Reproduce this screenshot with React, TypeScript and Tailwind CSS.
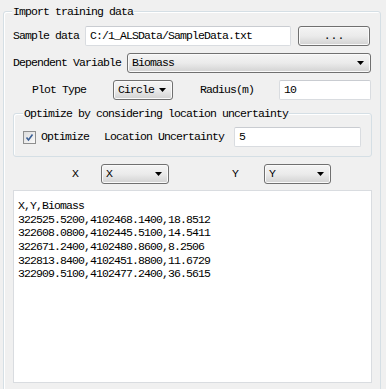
import React from "react";

const font = { fontFamily: '"Liberation Mono", "DejaVu Sans Mono", monospace' };

function Arrow() {
  return (
    <svg width="7" height="4" viewBox="0 0 7 4" className="shrink-0">
      <path d="M0 0H7L3.5 4Z" fill="#000" />
    </svg>
  );
}

function Combo({ w, text }: { w: string; text: string }) {
  return (
    <div
      className={`${w} h-[20px] flex items-center justify-between pl-[4px] pr-[6px] border border-[#707070] rounded-[3px] bg-linear-to-b from-[#f4f4f4] via-[#ebebeb] to-[#d2d2d2] shadow-[inset_0_0_0_1px_#fafafa]`}
    >
      <span>{text}</span>
      <Arrow />
    </div>
  );
}

function Input({ w, text }: { w: string; text: string }) {
  return (
    <div className={`${w} h-[20px] flex items-center pl-[4px] bg-white border border-[#d9dce0] border-t-[#c9ccd1] rounded-[2px]`}>
      {text}
    </div>
  );
}

export default function App() {
  const lines = [
    "X,Y,Biomass",
    "322525.5200,4102468.1400,18.8512",
    "322608.0800,4102445.5100,14.5411",
    "322671.2400,4102480.8600,8.2506",
    "322813.8400,4102451.8800,11.6729",
    "322909.5100,4102477.2400,36.5615",
  ];
  return (
    <div
      className="w-[386px] h-[389px] overflow-hidden bg-[#f0f0f0] text-black text-[11.5px] tracking-[-0.9px] leading-none pt-[11px] pl-[3px]"
      style={font}
    >
      <div className="relative w-[378px] h-[400px] border border-[#d5dfe5] rounded-[3px] shadow-[inset_1px_1px_0_#ffffff] pl-[9px] pt-[14px]">
        <span className="absolute left-[8px] top-[-6px] px-[1px] bg-[#f0f0f0] leading-[12px]">Import training data</span>

        {/* Row 1 */}
        <div className="flex items-center h-[20px]">
          <span className="w-[72px]">Sample data</span>
          <Input w="w-[206px]" text="C:/1_ALSData/SampleData.txt" />
          <div className="ml-[7px] w-[72px] h-[20px] flex items-center justify-center border border-[#707070] rounded-[3px] bg-linear-to-b from-[#f4f4f4] via-[#ebebeb] to-[#d2d2d2] shadow-[inset_0_0_0_1px_#fafafa] tracking-[0px]">
            ...
          </div>
        </div>

        {/* Row 2 */}
        <div className="flex items-center h-[20px] mt-[7px]">
          <span className="w-[114px]">Dependent Variable</span>
          <Combo w="w-[244px]" text="Biomass" />
        </div>

        {/* Row 3 */}
        <div className="flex items-center h-[20px] mt-[7px] pl-[19px]">
          <span className="w-[81px]">Plot Type</span>
          <Combo w="w-[60px]" text="Circle" />
          <span className="ml-[27px] w-[79px]">Radius(m)</span>
          <Input w="w-[92px]" text="10" />
        </div>

        {/* Inner group */}
        <div className="relative mt-[13px] w-[359px] h-[44px] border border-[#d5dfe5] rounded-[3px] shadow-[inset_1px_1px_0_#ffffff] pl-[9px] pt-[13px]">
          <span className="absolute left-[9px] top-[-6px] px-[1px] bg-[#f0f0f0] leading-[12px]">
            Optimize by considering location uncertainty
          </span>
          <div className="flex items-center h-[20px]">
            <div className="w-[13px] h-[13px] border border-[#8e8f8f] bg-linear-to-br from-[#dcdcdc] to-[#fafafa] flex items-center justify-center">
              <svg width="9" height="9" viewBox="0 0 9 9">
                <path d="M1.5 4.5L3.5 7L7.5 1.5" stroke="#3a5f95" strokeWidth="1.6" fill="none" />
              </svg>
            </div>
            <span className="ml-[5px] w-[63px]">Optimize</span>
            <span className="w-[130px]">Location Uncertainty</span>
            <Input w="w-[127px]" text="5" />
          </div>
        </div>

        {/* X / Y */}
        <div className="flex items-center h-[20px] mt-[7px] pl-[59px]">
          <span className="w-[29px]">X</span>
          <Combo w="w-[68px]" text="X" />
          <span className="ml-[63px] w-[32px]">Y</span>
          <Combo w="w-[67px]" text="Y" />
        </div>

        {/* Text area */}
        <div className="mt-[6px] w-[359px] h-[193px] bg-white border border-[#d9dce0] pl-[4px] pt-[8px] leading-[13.67px]">
          {lines.map((l) => (
            <div key={l} className="whitespace-pre">
              {l}
            </div>
          ))}
        </div>
      </div>
    </div>
  );
}
